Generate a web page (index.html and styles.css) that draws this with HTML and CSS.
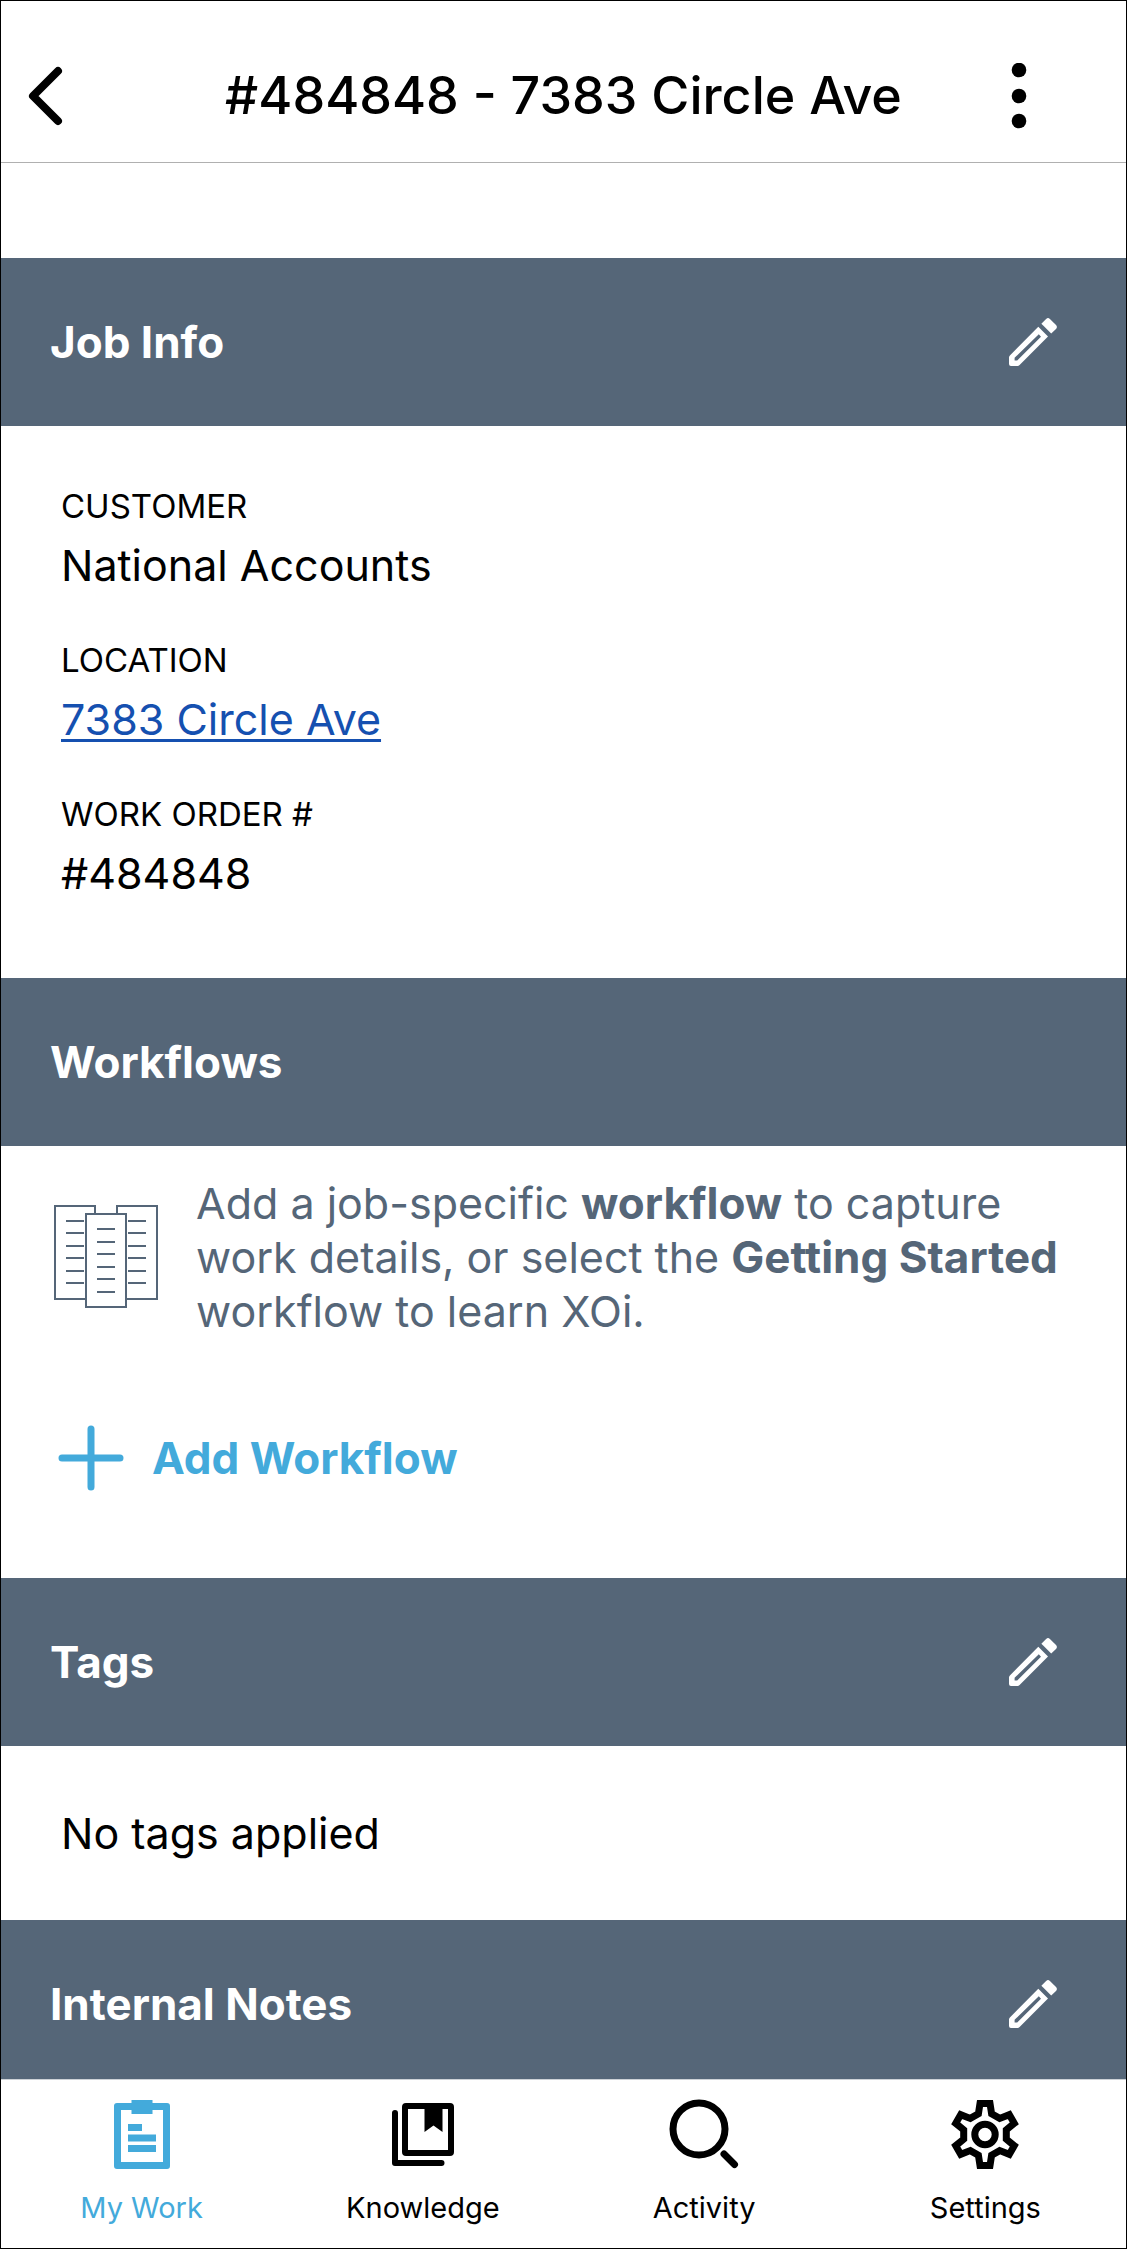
FILE: index.html
```html
<!doctype html>
<html lang="en">
<head>
  <meta charset="utf-8">
  <title>#484848 - 7383 Circle Ave</title>
  <meta name="viewport" content="width=device-width, initial-scale=1">
  <link rel="stylesheet" href="styles.css">
</head>
<body>
  <!-- shared icons -->
  <svg class="sprite" aria-hidden="true" xmlns="http://www.w3.org/2000/svg">
    <symbol id="icon-pencil" viewBox="0 0 48 48">
      <path fill="currentColor" fill-rule="evenodd" d="M29.3 8.7 39 18.4 10.6 47.1Q9.7 48 8.4 48H2Q0 48 0 46V39.6Q0 38.3.9 37.4ZM5.6 39.8V42.4H8.2L32 18.7 29.8 16.3Z"/>
      <path fill="currentColor" d="M32.4 5.7 37.1 1Q39 -.8 40.9 1L47 7.1Q48.8 9 47 10.9L42.2 15.6Z"/>
    </symbol>
  </svg>

  <div class="app">
    <header class="topbar">
      <button class="topbar__back" type="button" aria-label="Back">
        <svg width="48" height="66" viewBox="0 0 48 66" fill="none" stroke="currentColor" stroke-width="8" stroke-linecap="round" stroke-linejoin="round">
          <path d="M37 8 12 33 37 58"/>
        </svg>
      </button>
      <h1 class="topbar__title">#484848 - 7383 Circle Ave</h1>
      <button class="topbar__menu" type="button" aria-label="More options">
        <svg width="48" height="66" viewBox="0 0 48 66" fill="currentColor">
          <circle cx="24" cy="7" r="7.3"/>
          <circle cx="24" cy="33" r="7.3"/>
          <circle cx="24" cy="58" r="7.3"/>
        </svg>
      </button>
    </header>

    <main class="content">
      <section>
        <div class="section-head">
          <h2 class="section-head__title">Job Info</h2>
          <button class="section-head__edit" type="button" aria-label="Edit job info">
            <svg width="48" height="48"><use href="#icon-pencil"/></svg>
          </button>
        </div>
        <dl class="info">
          <div class="info__row">
            <dt class="info__label">CUSTOMER</dt>
            <dd class="info__value">National Accounts</dd>
          </div>
          <div class="info__row">
            <dt class="info__label">LOCATION</dt>
            <dd class="info__value"><a class="info__link" href="#location">7383 Circle Ave</a></dd>
          </div>
          <div class="info__row">
            <dt class="info__label">WORK ORDER #</dt>
            <dd class="info__value">#484848</dd>
          </div>
        </dl>
      </section>

      <section>
        <div class="section-head">
          <h2 class="section-head__title">Workflows</h2>
        </div>
        <div class="workflows">
          <div class="workflows__hint">
            <svg class="workflows__art" width="106" height="106" viewBox="0 0 106 106" fill="#fff" stroke="currentColor" stroke-width="2" aria-hidden="true">
              <path d="M1 2H41V95H1ZM63 2H103V95H63Z"/>
              <path d="M12 17H30M12 29H30M12 42H30M12 54H30M12 67H30M12 79H30M74 17H92M74 29H92M74 42H92M74 54H92M74 67H92M74 79H92"/>
              <path d="M32 10H72V103H32Z"/>
              <path d="M43 25H61M43 38H61M43 50H61M43 63H61M43 75H61M43 88H61"/>
            </svg>
            <p class="workflows__text">Add a job-specific <b>workflow</b> to capture work details, or select the <b>Getting Started</b> workflow to learn XOi.</p>
          </div>
          <button class="workflows__add" type="button">
            <svg width="66" height="66" viewBox="0 0 66 66" fill="none" stroke="currentColor" stroke-width="7" stroke-linecap="round" aria-hidden="true">
              <path d="M33 4V62M4 33H62"/>
            </svg>
            Add Workflow
          </button>
        </div>
      </section>

      <section>
        <div class="section-head">
          <h2 class="section-head__title">Tags</h2>
          <button class="section-head__edit" type="button" aria-label="Edit tags">
            <svg width="48" height="48"><use href="#icon-pencil"/></svg>
          </button>
        </div>
        <p class="tags">No tags applied</p>
      </section>

      <section>
        <div class="section-head">
          <h2 class="section-head__title">Internal Notes</h2>
          <button class="section-head__edit" type="button" aria-label="Edit internal notes">
            <svg width="48" height="48"><use href="#icon-pencil"/></svg>
          </button>
        </div>
      </section>
    </main>

    <nav class="tabbar">
      <a class="tabbar__item tabbar__item--active" href="#my-work">
        <svg width="80" height="80" viewBox="0 0 80 80" fill="currentColor" aria-hidden="true">
          <path fill-rule="evenodd" d="M15 9H65Q68 9 68 12V72Q68 75 65 75H15Q12 75 12 72V12Q12 9 15 9ZM19 16V68H61V16Z"/>
          <path d="M29.5 6H50.5V20H29.5ZM26 30H40V37H26ZM26 40.5H54V47.5H26ZM26 51H54V58H26Z"/>
        </svg>
        My Work
      </a>
      <a class="tabbar__item" href="#knowledge">
        <svg width="80" height="80" viewBox="0 0 80 80" fill="none" stroke="currentColor" stroke-width="6" aria-hidden="true">
          <rect x="22" y="12" width="46" height="47" rx="1"/>
          <path stroke-linecap="round" stroke-linejoin="round" d="M12 19V69H58.5"/>
          <path fill="currentColor" stroke="none" d="M41.5 14H59.5V38L50.5 31.5 41.5 38Z"/>
        </svg>
        Knowledge
      </a>
      <a class="tabbar__item" href="#activity">
        <svg width="80" height="80" viewBox="0 0 80 80" fill="none" stroke="currentColor" stroke-width="7" stroke-linecap="round" aria-hidden="true">
          <circle cx="35" cy="35" r="26"/>
          <path d="M60 60 70.5 70.5"/>
        </svg>
        Activity
      </a>
      <a class="tabbar__item" href="#settings">
        <svg width="80" height="80" viewBox="0 0 80 80" fill="none" stroke="currentColor" stroke-width="7" aria-hidden="true">
          <path d="M35 9.5H45L46.6 19.7 54.7 24.4 64.3 20.7 69.3 29.3 61.3 35.8V45.2L69.3 51.7 64.3 60.3 54.7 56.6 46.6 61.3 45 71.5H35L33.4 61.3 25.3 56.6 15.7 60.3 10.7 51.7 18.7 45.2V35.8L10.7 29.3 15.7 20.7 25.3 24.4 33.4 19.7Z"/>
          <circle cx="40" cy="40.5" r="10.2"/>
        </svg>
        Settings
      </a>
    </nav>
  </div>
</body>
</html>
```

FILE: styles.css
```css
* {
  box-sizing: border-box;
}

body {
  margin: 0;
  background-color: #fff;
  color: #000;
  font-family: Inter, "Liberation Sans", sans-serif;
  font-size: 43px;
  line-height: 54px;
}

h1, h2, p, dl, dd {
  margin: 0;
}

button {
  padding: 0;
  border: 0;
  background: none;
  color: inherit;
  font: inherit;
  cursor: pointer;
}

svg {
  display: block;
  flex-shrink: 0;
}

.sprite {
  position: absolute;
  width: 0;
  height: 0;
}

.app {
  display: flex;
  flex-direction: column;
  height: 100vh;
  border: 1px solid #000;
}

/* top bar */
.topbar {
  display: grid;
  grid-template-columns: 1fr auto 1fr;
  align-items: center;
  padding: 62px 0 33px;
  border-bottom: 1px solid #b0b0b0;
}

.topbar__back {
  justify-self: start;
  margin-left: 20px;
}

.topbar__title {
  font-size: 52px;
  font-weight: 500;
  line-height: 66px;
}

.topbar__menu {
  justify-self: end;
  margin-right: 83px;
}

/* scrolling area between the bars */
.content {
  flex: 1;
  min-height: 0;
  padding-top: 95px;
  overflow-y: auto;
  scrollbar-width: none;
}

.section-head {
  display: flex;
  align-items: center;
  justify-content: space-between;
  height: 168px;
  padding: 0 69px 0 49px;
  background-color: #556678;
  color: #fff;
}

.section-head__title {
  font-size: 44px;
  font-weight: 700;
}

.info {
  display: flex;
  flex-direction: column;
  gap: 48px;
  padding: 60px 60px 78px;
}

.info__label {
  margin-bottom: 12px;
  font-size: 33px;
  line-height: 40px;
}

.info__link {
  color: #1550b0;
  text-decoration-thickness: 3px;
  text-underline-offset: 4px;
}

.workflows {
  padding: 30px 30px 87px 53px;
}

.workflows__hint {
  display: flex;
  align-items: center;
  gap: 36px;
  margin-bottom: 87px;
  color: #556678;
}

.workflows__text b {
  font-size: 44px;
  font-weight: 700;
}

.workflows__add {
  display: flex;
  align-items: center;
  gap: 28px;
  margin-left: 4px;
  color: #43aadb;
  font-size: 44px;
  font-weight: 700;
}

.tags {
  padding: 60px;
}

/* bottom navigation */
.tabbar {
  display: grid;
  grid-template-columns: repeat(4, 1fr);
  padding: 14px 0 22px;
  border-top: 1px solid #ccd1d6;
  background-color: #fff;
}

.tabbar__item {
  display: flex;
  flex-direction: column;
  align-items: center;
  gap: 16px;
  color: #000;
  font-size: 29px;
  line-height: 36px;
  text-decoration: none;
}

.tabbar__item--active {
  color: #43aadb;
}
```
